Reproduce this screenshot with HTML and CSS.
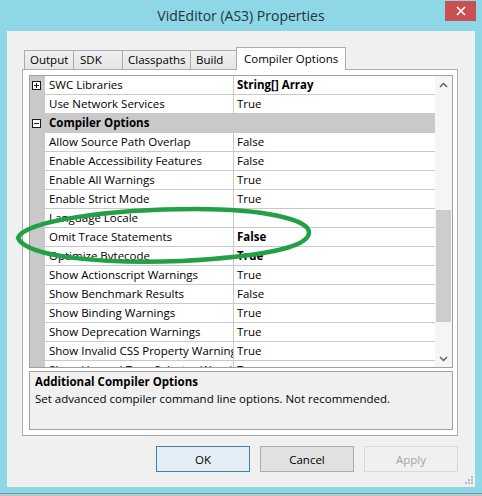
FILE: index.html
```html
<!DOCTYPE html>
<html lang="en">
<head>
<meta charset="utf-8">
<title>VidEditor (AS3) Properties</title>
<link rel="stylesheet" href="styles.css">
</head>
<body>
<div class="window">
  <div class="titlebar">
    <div class="title">VidEditor (AS3) Properties</div>
    <div class="close">
      <svg width="10" height="10" viewBox="0 0 10 10"><path d="M1 1 L9 9 M9 1 L1 9" stroke="#fff" stroke-width="1.6" fill="none"/></svg>
    </div>
  </div>

  <div class="client">
    <div class="tabs">
      <div class="tab tab-output">Output</div>
      <div class="tab tab-sdk">SDK</div>
      <div class="tab tab-classpaths">Classpaths</div>
      <div class="tab tab-build">Build</div>
      <div class="tab tab-compiler selected">Compiler Options</div>
    </div>

    <div class="panel">
      <div class="pgrid">
        <div class="pg-rows">
          <div class="row"><span class="gutter"><span class="box plus"></span></span><span class="name">SWC Libraries</span><span class="value bold">String[] Array</span></div>
          <div class="row"><span class="gutter"></span><span class="name">Use Network Services</span><span class="value">True</span></div>
          <div class="row category"><span class="gutter"><span class="box"></span></span><span class="name">Compiler Options</span><span class="value"></span></div>
          <div class="row"><span class="gutter"></span><span class="name">Allow Source Path Overlap</span><span class="value">False</span></div>
          <div class="row"><span class="gutter"></span><span class="name">Enable Accessibility Features</span><span class="value">False</span></div>
          <div class="row"><span class="gutter"></span><span class="name">Enable All Warnings</span><span class="value">True</span></div>
          <div class="row"><span class="gutter"></span><span class="name">Enable Strict Mode</span><span class="value">True</span></div>
          <div class="row"><span class="gutter"></span><span class="name">Language Locale</span><span class="value"></span></div>
          <div class="row"><span class="gutter"></span><span class="name">Omit Trace Statements</span><span class="value bold">False</span></div>
          <div class="row"><span class="gutter"></span><span class="name">Optimize Bytecode</span><span class="value bold">True</span></div>
          <div class="row"><span class="gutter"></span><span class="name">Show Actionscript Warnings</span><span class="value">True</span></div>
          <div class="row"><span class="gutter"></span><span class="name">Show Benchmark Results</span><span class="value">False</span></div>
          <div class="row"><span class="gutter"></span><span class="name">Show Binding Warnings</span><span class="value">True</span></div>
          <div class="row"><span class="gutter"></span><span class="name">Show Deprecation Warnings</span><span class="value">True</span></div>
          <div class="row"><span class="gutter"></span><span class="name">Show Invalid CSS Property Warnings</span><span class="value">True</span></div>
          <div class="row"><span class="gutter"></span><span class="name">Show Unused Type Selector Warnings</span><span class="value">True</span></div>
        </div>
        <div class="pg-scroll">
          <div class="sb-btn">
            <svg width="9" height="6" viewBox="0 0 9 6"><path d="M1 5 L4.5 1.5 L8 5" stroke="#606060" stroke-width="1.5" fill="none"/></svg>
          </div>
          <div class="sb-track"><div class="sb-thumb"></div></div>
          <div class="sb-btn">
            <svg width="9" height="6" viewBox="0 0 9 6"><path d="M1 1 L4.5 4.5 L8 1" stroke="#606060" stroke-width="1.5" fill="none"/></svg>
          </div>
        </div>
      </div>
      <div class="desc">
        <div class="desc-title">Additional Compiler Options</div>
        <div class="desc-text">Set advanced compiler command line options. Not recommended.</div>
      </div>
    </div>

    <div class="buttons">
      <div class="btn default">OK</div>
      <div class="btn">Cancel</div>
      <div class="btn disabled">Apply</div>
    </div>

    <svg class="grip" width="8" height="8" viewBox="0 0 8 8">
      <rect x="6" y="0" width="2" height="2" fill="#b8b8b8"/>
      <rect x="3" y="3" width="2" height="2" fill="#b8b8b8"/>
      <rect x="6" y="3" width="2" height="2" fill="#b8b8b8"/>
      <rect x="0" y="6" width="2" height="2" fill="#b8b8b8"/>
      <rect x="3" y="6" width="2" height="2" fill="#b8b8b8"/>
      <rect x="6" y="6" width="2" height="2" fill="#b8b8b8"/>
    </svg>
  </div>
</div>

<!-- hand-drawn marker ring around the trace option -->
<svg class="marker" width="482" height="496" viewBox="0 0 482 496">
  <path d="M18 238 C 23 221, 110 209, 196 209 C 262 209, 310 219, 309 233 C 308 249, 252 257, 182 261 C 108 264, 27 258, 18 238 Z"
        fill="none" stroke="#22a046" stroke-width="4.5" stroke-linejoin="round"/>
</svg>
</body>
</html>
```

FILE: styles.css
```css
html, body {
  margin: 0;
  padding: 0;
}

body {
  width: 482px;
  height: 496px;
  overflow: hidden;
  position: relative;
  background: #b9c9cc;
  font-family: "Open Sans", "Noto Sans", sans-serif;
  font-size: 11.5px;
  color: #000;
}

.window {
  display: flex;
  flex-direction: column;
  height: 493px;
  background: #8dd7e7;
  border-bottom: 1px solid #6a9aa5;
}

/* ---------- title bar ---------- */
.titlebar {
  height: 31px;
  display: grid;
  grid-template-columns: 1fr auto 1fr;
  flex: none;
}

.title {
  grid-column: 2;
  font-size: 14px;
  line-height: 31px;
  color: #23333f;
}

.close {
  grid-column: 3;
  justify-self: end;
  align-self: start;
  margin: 1px 6px 0 0;
  width: 31px;
  height: 20px;
  background: #c75050;
  display: flex;
  align-items: center;
  justify-content: center;
}

/* ---------- client area ---------- */
.client {
  position: relative;
  margin: 0 7px;
  height: 456px;
  flex: none;
  box-sizing: border-box;
  background: #f0f0f0;
  padding: 16px 17px 0 15px;
  display: flex;
  flex-direction: column;
}

/* tab strip */
.tabs {
  display: flex;
  align-items: flex-end;
  height: 23px;
  margin: 0 0 -1px 2px;
  position: relative;
  z-index: 1;
}

.tab {
  box-sizing: border-box;
  height: 19px;
  margin-bottom: 1px;
  border: 1px solid #acacac;
  border-bottom: none;
  background: linear-gradient(#f0f0f0, #e5e5e5);
  padding-left: 5px;
  line-height: 18px;
  white-space: nowrap;
}

.tab + .tab {
  margin-left: -1px;
}

.tab-output { width: 50px; }
.tab-sdk { width: 50px; padding-left: 6px; }
.tab-classpaths { width: 69px; }
.tab-build { width: 47px; }

.tab.selected {
  width: 110px;
  height: 23px;
  margin-bottom: 0;
  background: #fff;
  padding-left: 7px;
  line-height: 21px;
}

/* tab page */
.panel {
  box-sizing: border-box;
  height: 367px;
  flex: none;
  border: 1px solid #acacac;
  background: #fff;
  padding: 5px 4px 5px 6px;
  display: flex;
  flex-direction: column;
  gap: 3px;
}

/* ---------- property grid ---------- */
.pgrid {
  box-sizing: border-box;
  height: 293px;
  flex: none;
  border: 1px solid #a0a0a0;
  display: flex;
  background: #fff;
}

.pg-rows {
  width: 405px;
  overflow: hidden;
}

.row {
  display: grid;
  grid-template-columns: 14px 188px 202px;
  column-gap: 1px;
  height: 19px;
  box-sizing: border-box;
  padding-bottom: 1px;
  background: #c9c9c9;
}

.row .name,
.row .value {
  background: #fff;
  line-height: 18px;
  white-space: nowrap;
  overflow: hidden;
}

.row .name {
  padding-left: 4px;
}

.row .value {
  padding-left: 3px;
}

.bold {
  font-weight: 700;
}

.row.category .name,
.row.category .value {
  background: transparent;
  font-weight: 700;
}

.row.category .value {
  margin-left: -1px;
}

.gutter {
  position: relative;
}

/* expand / collapse boxes */
.box {
  position: absolute;
  left: 2px;
  top: 5px;
  width: 9px;
  height: 9px;
  box-sizing: border-box;
  border: 1px solid #1a1a1a;
  background: #fff;
}

.box::before,
.box.plus::after {
  content: "";
  position: absolute;
  background: #1a1a1a;
}

.box::before {
  left: 1px;
  top: 3px;
  width: 5px;
  height: 1px;
}

.box.plus::after {
  left: 3px;
  top: 1px;
  width: 1px;
  height: 5px;
}

/* vertical scroll bar */
.pg-scroll {
  width: 17px;
  display: flex;
  flex-direction: column;
  background: #f5f5f5;
}

.sb-btn {
  height: 17px;
  flex: none;
  display: flex;
  align-items: center;
  justify-content: center;
}

.sb-track {
  flex: 1;
}

.sb-thumb {
  margin: 117px 1px 0 1px;
  height: 112px;
  background: #cdcdcd;
}

/* description pane */
.desc {
  flex: 1;
  box-sizing: border-box;
  border: 1px solid #a0a0a0;
  background: #f0f0f0;
  padding: 1px 5px;
  line-height: 17px;
}

.desc-title {
  font-weight: 700;
}

/* ---------- dialog buttons ---------- */
.buttons {
  display: flex;
  justify-content: flex-end;
  gap: 10px;
  margin-top: 10px;
}

.btn {
  box-sizing: border-box;
  width: 94px;
  height: 26px;
  border: 1px solid #adadad;
  background: #e1e1e1;
  display: flex;
  align-items: center;
  justify-content: center;
}

.btn.default {
  border-color: #3c7fb1;
  background: #e5eef6;
}

.btn.disabled {
  border-color: #d9d9d9;
  background: #f0f0f0;
  color: #a3a3a3;
}

/* size grip in the corner */
.grip {
  position: absolute;
  right: 2px;
  bottom: 3px;
}

/* annotation drawn over the dialog */
.marker {
  position: absolute;
  left: 0;
  top: 0;
  pointer-events: none;
}
```
